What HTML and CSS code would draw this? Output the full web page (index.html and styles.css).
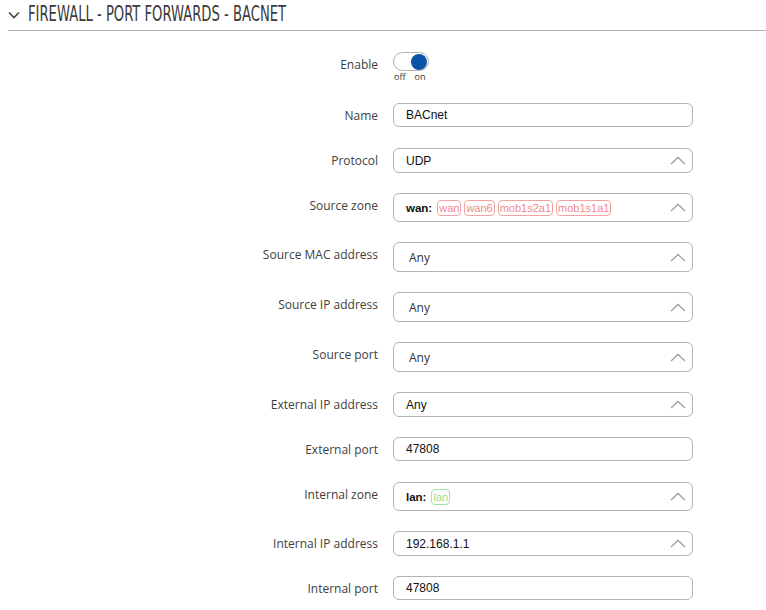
FILE: index.html
```html
<!DOCTYPE html>
<html>
<head>
<meta charset="utf-8">
<link rel="stylesheet" href="styles.css">
</head>
<body>
<section class="section">
  <header class="section-head">
    <svg class="head-chevron" width="12" height="8" viewBox="0 0 12 8"><path d="M1 1.5 L6 6.5 L11 1.5" fill="none" stroke="#444" stroke-width="1.6"/></svg>
    <h1 class="title">FIREWALL - PORT FORWARDS - BACNET</h1>
  </header>
  <div class="form">
    <div class="row row-enable">
      <label class="lbl">Enable</label>
      <div class="field">
        <div class="toggle"><span class="knob"></span></div>
        <div class="toggle-text"><span>off</span><span>on</span></div>
      </div>
    </div>
    <div class="row">
      <label class="lbl">Name</label>
      <div class="box box-text">BACnet</div>
    </div>
    <div class="row">
      <label class="lbl">Protocol</label>
      <div class="box box-select">UDP<svg class="caret" width="16" height="9" viewBox="0 0 16 9"><path d="M1 8 L8 1.5 L15 8" fill="none" stroke="#a0a0a0" stroke-width="1.3"/></svg></div>
    </div>
    <div class="row">
      <label class="lbl">Source zone</label>
      <div class="box box-select box-zone"><b class="zone-name">wan:</b><span class="tag tag-red">wan</span><span class="tag tag-red">wan6</span><span class="tag tag-red">mob1s2a1</span><span class="tag tag-red">mob1s1a1</span><svg class="caret" width="16" height="9" viewBox="0 0 16 9"><path d="M1 8 L8 1.5 L15 8" fill="none" stroke="#a0a0a0" stroke-width="1.3"/></svg></div>
    </div>
    <div class="row">
      <label class="lbl">Source MAC address</label>
      <div class="box box-select box-any">Any<svg class="caret" width="16" height="9" viewBox="0 0 16 9"><path d="M1 8 L8 1.5 L15 8" fill="none" stroke="#a0a0a0" stroke-width="1.3"/></svg></div>
    </div>
    <div class="row">
      <label class="lbl">Source IP address</label>
      <div class="box box-select box-any">Any<svg class="caret" width="16" height="9" viewBox="0 0 16 9"><path d="M1 8 L8 1.5 L15 8" fill="none" stroke="#a0a0a0" stroke-width="1.3"/></svg></div>
    </div>
    <div class="row">
      <label class="lbl">Source port</label>
      <div class="box box-select box-any">Any<svg class="caret" width="16" height="9" viewBox="0 0 16 9"><path d="M1 8 L8 1.5 L15 8" fill="none" stroke="#a0a0a0" stroke-width="1.3"/></svg></div>
    </div>
    <div class="row">
      <label class="lbl">External IP address</label>
      <div class="box box-select">Any<svg class="caret" width="16" height="9" viewBox="0 0 16 9"><path d="M1 8 L8 1.5 L15 8" fill="none" stroke="#a0a0a0" stroke-width="1.3"/></svg></div>
    </div>
    <div class="row">
      <label class="lbl">External port</label>
      <div class="box box-text">47808</div>
    </div>
    <div class="row">
      <label class="lbl">Internal zone</label>
      <div class="box box-select box-zone"><b class="zone-name">lan:</b><span class="tag tag-green">lan</span><svg class="caret" width="16" height="9" viewBox="0 0 16 9"><path d="M1 8 L8 1.5 L15 8" fill="none" stroke="#a0a0a0" stroke-width="1.3"/></svg></div>
    </div>
    <div class="row">
      <label class="lbl">Internal IP address</label>
      <div class="box box-select">192.168.1.1<svg class="caret" width="16" height="9" viewBox="0 0 16 9"><path d="M1 8 L8 1.5 L15 8" fill="none" stroke="#a0a0a0" stroke-width="1.3"/></svg></div>
    </div>
    <div class="row">
      <label class="lbl">Internal port</label>
      <div class="box box-text">47808</div>
    </div>
  </div>
</section>
</body>
</html>
```
FILE: styles.css
```css
* { box-sizing: border-box; }
html, body { margin: 0; padding: 0; background: #fff; }
body { font-family: "Open Sans", "Liberation Sans", sans-serif; color: #404040; }

.section { margin-left: 8px; }

.section-head {
  display: flex;
  align-items: center;
  height: 31px;
  border-bottom: 1px solid #b4b4b4;
  padding-bottom: 2px;
}
.head-chevron { margin-right: 8px; margin-top: 2px; flex: none; }
.title {
  margin: 0;
  font-family: "DejaVu Sans Condensed", "Liberation Sans", sans-serif;
  font-stretch: condensed;
  font-weight: normal;
  font-size: 22px;
  line-height: 24px;
  color: #3a3a3a;
  white-space: nowrap;
  transform: scaleX(0.665);
  transform-origin: left center;
}

.form { padding-top: 21px; }

.row {
  display: grid;
  grid-template-columns: 370px 300px;
  column-gap: 15px;
  align-items: start;
  margin-bottom: 20px;
}
.lbl {
  text-align: right;
  font-size: 12px;
  line-height: 24px;
  padding-top: 1px;
  color: #404040;
}

.row-enable { margin-bottom: 21px; }
.toggle {
  width: 36px;
  height: 19px;
  border: 1px solid #b0b0b0;
  border-radius: 10px;
  position: relative;
  background: #fff;
}
.knob {
  position: absolute;
  right: 1px;
  top: 0.5px;
  width: 16px;
  height: 16px;
  border-radius: 50%;
  background: #0b53a8;
}
.toggle-text {
  display: flex;
  gap: 9px;
  font-size: 9px;
  line-height: 11px;
  color: #333;
  padding-left: 1px;
}

.box {
  display: flex;
  align-items: center;
  width: 300px;
  height: 24px;
  border: 1px solid #b4b4b4;
  border-radius: 6px;
  padding-left: 12px;
  padding-right: 6px;
  font-family: "Liberation Sans", Arial, sans-serif;
  font-size: 12px;
  color: #111;
}
.box-select { height: 25px; }
.box-zone { height: 29px; }
.box-any {
  height: 30px;
  padding-left: 15px;
  padding-top: 1px;
  font-family: "Open Sans", "Liberation Sans", sans-serif;
  font-size: 12px;
  color: #333;
}
.caret { margin-left: auto; flex: none; }

.zone-name { font-weight: bold; font-size: 11.5px; margin-right: 5px; }
.tag {
  display: inline-block;
  height: 16px;
  line-height: 14px;
  padding: 0 1px;
  border: 1px solid;
  border-radius: 4px;
  margin-right: 3px;
  font-size: 11px;
}
.tag-red { color: #f08a8a; border-color: #f4a3a3; }
.tag-green { color: #8ee08e; border-color: #9ee89e; }
```
